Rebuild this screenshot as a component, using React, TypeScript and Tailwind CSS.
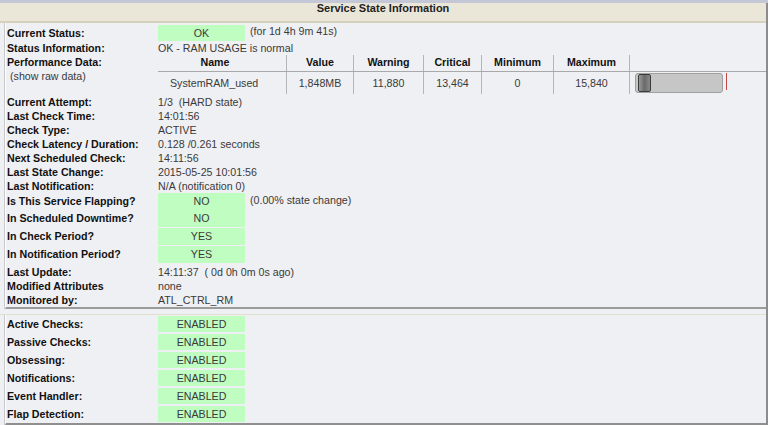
import React from "react";

const infoRows = [
  { label: "Current Attempt:", value: "1/3\u00a0\u00a0(HARD state)" },
  { label: "Last Check Time:", value: "14:01:56" },
  { label: "Check Type:", value: "ACTIVE" },
  { label: "Check Latency / Duration:", value: "0.128 /0.261 seconds" },
  { label: "Next Scheduled Check:", value: "14:11:56" },
  { label: "Last State Change:", value: "2015-05-25 10:01:56" },
  { label: "Last Notification:", value: "N/A (notification 0)" },
];

const flagRows = [
  { label: "Is This Service Flapping?", value: "NO", extra: "(0.00% state change)" },
  { label: "In Scheduled Downtime?", value: "NO" },
  { label: "In Check Period?", value: "YES" },
  { label: "In Notification Period?", value: "YES" },
];

const tailRows = [
  { label: "Last Update:", value: "14:11:37\u00a0\u00a0( 0d 0h 0m 0s ago)" },
  { label: "Modified Attributes", value: "none" },
  { label: "Monitored by:", value: "ATL_CTRL_RM" },
];

const checks = [
  "Active Checks:",
  "Passive Checks:",
  "Obsessing:",
  "Notifications:",
  "Event Handler:",
  "Flap Detection:",
];

const perfCols = [
  { name: "Value", value: "1,848MB", w: "w-[67px]" },
  { name: "Warning", value: "11,880", w: "w-[70px]" },
  { name: "Critical", value: "13,464", w: "w-[58px]" },
  { name: "Minimum", value: "0", w: "w-[72px]" },
  { name: "Maximum", value: "15,840", w: "w-[76px]" },
];

function TextRow({ label, value }: { label: string; value: string }) {
  return (
    <div className="flex h-[14px] leading-[14px]">
      <div className="w-[151px] shrink-0 font-bold text-[#111]">{label}</div>
      <div className="text-[#3a3a3a] whitespace-pre">{value}</div>
    </div>
  );
}

function GreenBox({ children, className }: { children: React.ReactNode; className: string }) {
  return (
    <div className={`w-[87px] shrink-0 bg-[#c0fdc0] text-center text-[#3a3a3a] ${className}`}>{children}</div>
  );
}

function PerfTable() {
  return (
    <div className="flex-1 flex flex-col">
      {/* header */}
      <div className="flex h-[17px] border-b border-[#a9a9a9] font-bold text-[#111] leading-[14px]">
        <div className="w-[129px] border-r border-[#b5b5b5] text-center pr-[14px]">Name</div>
        {perfCols.map((c) => (
          <div key={c.name} className={`${c.w} border-r border-[#b5b5b5] text-center`}>
            {c.name}
          </div>
        ))}
        <div className="flex-1" />
      </div>
      {/* data */}
      <div className="flex h-[22px] leading-[22px] text-[#3a3a3a]">
        <div className="w-[129px] border-r border-[#b5b5b5] pl-[12px]">SystemRAM_used</div>
        {perfCols.map((c) => (
          <div key={c.name} className={`${c.w} border-r border-[#b5b5b5] text-center`}>
            {c.value}
          </div>
        ))}
        <div className="flex-1 flex items-start pl-[5px] pt-[1px]">
          <div className="w-[88px] h-[20px] rounded-[3px] bg-[#c6c6c6] border border-[#a0a0a0] flex items-center pl-[2px]">
            <div className="w-[13px] h-[18px] rounded-[2px] border border-[#3a3a3a] bg-gradient-to-r from-[#9a9a9a] via-[#6a6a6a] to-[#8a8a8a]" />
          </div>
          <div className="ml-[3px] w-[1px] h-[17px] bg-[#c24848]" />
        </div>
      </div>
    </div>
  );
}

export default function App() {
  return (
    <div className="w-[768px] h-[425px] overflow-hidden bg-[#eff0f4] font-['Liberation_Sans',Arial,sans-serif] text-[10.67px]">
      <div className="h-[3px] bg-[#c4c7d6]" />
      <div className="border-r-2 border-[#8c8c8c] h-[422px]">
        {/* Title bar */}
        <div className="h-[20px] bg-[#ebe7d8] border-b-2 border-[#d6d1be] text-center font-bold text-[11px] leading-[11px] text-[#222]">
          Service State Information
        </div>

        {/* State section */}
        <div className="ml-[4px] border-l border-[#c9c9c9]">
          <div className="border-l border-white pl-[1px] pt-[2px] border-b-2 border-b-[#9b9b9b]">
            <div className="flex h-[16px] leading-[16px]">
              <div className="w-[151px] shrink-0 font-bold text-[#111]">Current Status:</div>
              <GreenBox className="h-[16px] leading-[16px]">OK</GreenBox>
              <div className="ml-[5px] text-[#3a3a3a] leading-[12px]">(for 1d 4h 9m 41s)</div>
            </div>
            <TextRow label="Status Information:" value="OK - RAM USAGE is normal" />
            <div className="flex h-[40px]">
              <div className="w-[151px] shrink-0 leading-[14px]">
                <div className="font-bold text-[#111]">Performance Data:</div>
                <div className="pl-[3px] text-[#3a3a3a]">(show raw data)</div>
              </div>
              <PerfTable />
            </div>
            {infoRows.map((r) => (
              <TextRow key={r.label} {...r} />
            ))}
            <div className="h-0" />
            {flagRows.map((r, i) => (
              <div key={r.label} className={`flex leading-[17px] ${i === 0 ? "h-[17px]" : "h-[18px]"}`}>
                <div className="w-[151px] shrink-0 font-bold text-[#111]">{r.label}</div>
                <GreenBox className="h-[17px] leading-[17px]">{r.value}</GreenBox>
                {r.extra && <div className="ml-[5px] text-[#3a3a3a] leading-[15px]">{r.extra}</div>}
              </div>
            ))}
            <div className="h-[1px]" />
            {tailRows.map((r) => (
              <TextRow key={r.label} {...r} />
            ))}
          </div>
        </div>

        {/* Gap between sections */}
        <div className="h-[5px]" />

        {/* Feature section */}
        <div className="border-t border-[#e2dfcf]">
          <div className="ml-[4px] border-l border-[#c9c9c9]">
            <div className="border-l border-white pl-[1px] border-b-2 border-b-[#8f8f8f]">
              {checks.map((c) => (
                <div key={c} className="flex h-[18px] leading-[18px]">
                  <div className="w-[151px] shrink-0 font-bold text-[#111]">{c}</div>
                  <GreenBox className="mt-[1px] h-[16px] leading-[16px]">ENABLED</GreenBox>
                </div>
              ))}
            </div>
          </div>
        </div>
      </div>
    </div>
  );
}
